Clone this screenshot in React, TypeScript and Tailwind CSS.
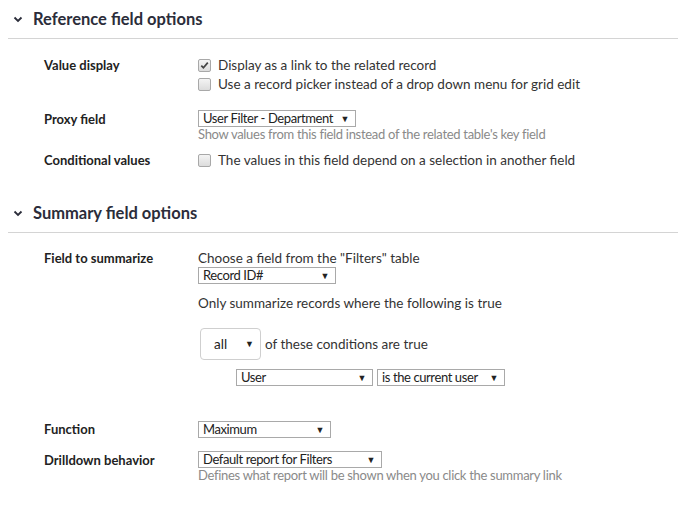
import React from "react";

function Chevron() {
  return (
    <svg width="10" height="7" viewBox="0 0 10 7" className="mr-[10px]">
      <path d="M1.5 1.5 L5 5 L8.5 1.5" fill="none" stroke="#2b2d3a" strokeWidth="1.8" />
    </svg>
  );
}

function Heading({ title }: { title: string }) {
  return (
    <div className="flex h-[39px] items-center border-b border-[#d4d4d4] pl-[5px]">
      <Chevron />
      <h2 className="text-[16.5px] font-bold text-[#2b2d3a]">{title}</h2>
    </div>
  );
}

function Checkbox({ checked = false }: { checked?: boolean }) {
  return (
    <span className="mr-[7px] flex h-[13px] w-[13px] shrink-0 items-center justify-center rounded-[2px] border border-[#a8a8a8] bg-gradient-to-b from-[#f4f4f4] to-[#dcdcdc]">
      {checked ? (
        <svg width="9" height="9" viewBox="0 0 9 9">
          <path d="M1.3 4.6 L3.4 6.8 L7.8 1.6" fill="none" stroke="#444" strokeWidth="1.7" />
        </svg>
      ) : null}
    </span>
  );
}

function CheckRow({ checked, label }: { checked?: boolean; label: string }) {
  return (
    <label className="flex h-[19px] items-center text-[13.5px] text-[#333]">
      <Checkbox checked={checked} />
      {label}
    </label>
  );
}

function Select({ value, width, className = "" }: { value: string; width: number; className?: string }) {
  return (
    <div
      className={`flex h-[17px] items-center justify-between border border-[#a9a9a9] bg-white pl-[4px] pr-[6px] text-[13px] leading-none tracking-[-0.4px] text-[#222] ${className}`}
      style={{ width }}
    >
      <span>{value}</span>
      <span className="text-[9px] text-[#222]">▼</span>
    </div>
  );
}

function Hint({ children }: { children: React.ReactNode }) {
  return <p className="text-[13px] leading-[14px] tracking-[-0.3px] text-[#8a8a8a]">{children}</p>;
}

function Label({ children, className = "" }: { children: React.ReactNode; className?: string }) {
  return (
    <div className={`w-[154px] shrink-0 text-[13px] font-bold leading-[19px] text-[#222] ${className}`}>
      {children}
    </div>
  );
}

export default function App() {
  return (
    <div className="min-h-[506px] w-[678px] bg-white pl-[8px]" style={{ fontFamily: "Lato, 'Noto Sans', sans-serif" }}>
      <Heading title="Reference field options" />
      <div className="pl-[36px]">
        <div className="mt-[17px] flex">
          <Label>Value display</Label>
          <div>
            <CheckRow checked label="Display as a link to the related record" />
            <CheckRow label="Use a record picker instead of a drop down menu for grid edit" />
          </div>
        </div>
        <div className="mt-[16px] flex">
          <Label className="leading-[16px]">Proxy field</Label>
          <div>
            <Select value="User Filter - Department" width={158} />
            <Hint>Show values from this field instead of the related table's key field</Hint>
          </div>
        </div>
        <div className="mt-[10px] flex">
          <Label>Conditional values</Label>
          <CheckRow label="The values in this field depend on a selection in another field" />
        </div>
      </div>

      <div className="mt-[24px]">
        <Heading title="Summary field options" />
      </div>
      <div className="pl-[36px]">
        <div className="mt-[16px] flex">
          <Label>Field to summarize</Label>
          <div className="text-[13.5px] text-[#333]">
            <p className="leading-[18px]">Choose a field from the "Filters" table</p>
            <Select value="Record ID#" width={138} />
            <p className="mt-[10px] leading-[19px]">Only summarize records where the following is true</p>
            <div className="ml-[2px] mt-[15px] flex items-center">
              <div className="flex h-[32px] w-[61px] items-center justify-between rounded-[4px] border border-[#cfcfcf] pl-[13px] pr-[6px]">
                <span className="text-[13.5px] text-[#222]">all</span>
                <span className="text-[9px] text-[#222]">▼</span>
              </div>
              <span className="ml-[4px]">of these conditions are true</span>
            </div>
            <div className="ml-[38px] mt-[9px] flex gap-[4px]">
              <Select value="User" width={137} />
              <Select value="is the current user" width={128} />
            </div>
          </div>
        </div>
        <div className="mt-[34px] flex items-center">
          <Label className="leading-[17px]">Function</Label>
          <Select value="Maximum" width={133} />
        </div>
        <div className="mt-[12px] flex">
          <Label className="leading-[16px]">Drilldown behavior</Label>
          <div>
            <Select value="Default report for Filters" width={184} />
            <Hint>Defines what report will be shown when you click the summary link</Hint>
          </div>
        </div>
      </div>
    </div>
  );
}
